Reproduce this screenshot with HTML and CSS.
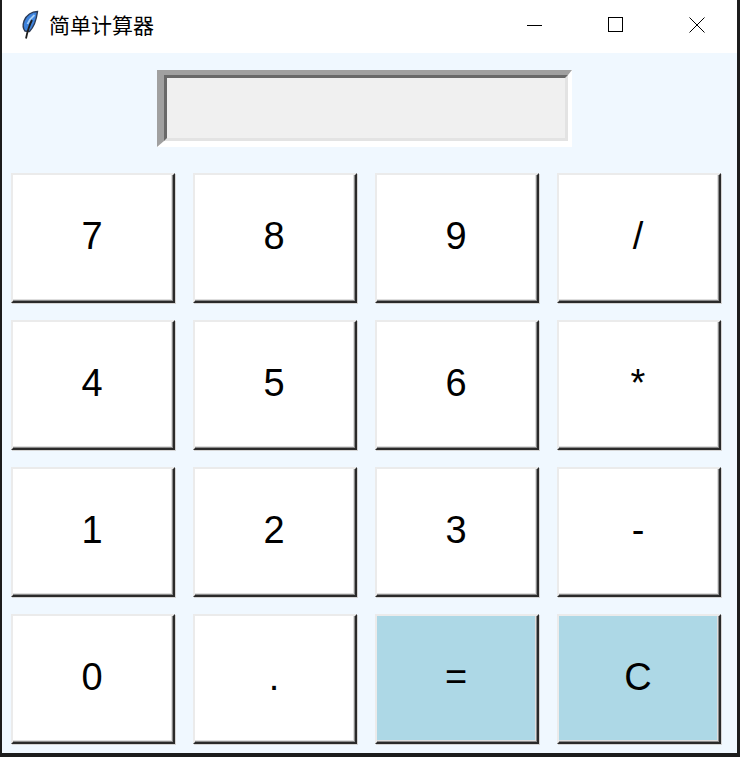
FILE: index.html
```html
<!DOCTYPE html>
<html>
	<head>
		<meta charset="utf-8">
		<title>简单计算器</title>
		<link rel="stylesheet" href="styles.css">
	</head>
	<body>
		<div class="window">
			<div class="titlebar">
				<svg class="feather" width="18" height="30" viewBox="0 0 18 30">
					<path d="M16.500 1.500C11 1.500 5 5 3 11C1.800 14.500 2 18.500 4 21L8.500 21.500C12.500 17.500 15.500 9 16.500 1.500Z" fill="#3d82dc" stroke="#2b3a55" stroke-width="1.400"/>
					<path d="M13.500 5C10.500 7.500 8 10.500 6.500 14" fill="none" stroke="#a8d0f7" stroke-width="1.800"/>
					<path d="M11 10C8.500 15 6.500 21 5 28.500" fill="none" stroke="#1d1d1d" stroke-width="1.800"/>
				</svg>
				<span class="title">简单计算器</span>
				<div class="controls">
					<svg class="ctrl" width="16" height="16" viewBox="0 0 16 16"><path d="M0 8.500H15" stroke="#000" fill="none"/></svg>
					<svg class="ctrl" width="16" height="16" viewBox="0 0 16 16"><rect x="0.500" y="0.500" width="14" height="14" stroke="#000" fill="none"/></svg>
					<svg class="ctrl" width="16" height="16" viewBox="0 0 16 16"><path d="M0.500 0.500L15.500 15.500M15.500 0.500L0.500 15.500" stroke="#000" fill="none"/></svg>
				</div>
			</div>
			<div class="client">
				<div class="entry"><div class="entry-inner"></div></div>
				<div class="keys">
					<button class="key">7</button>
					<button class="key">8</button>
					<button class="key">9</button>
					<button class="key">/</button>
					<button class="key">4</button>
					<button class="key">5</button>
					<button class="key">6</button>
					<button class="key">*</button>
					<button class="key">1</button>
					<button class="key">2</button>
					<button class="key">3</button>
					<button class="key">-</button>
					<button class="key">0</button>
					<button class="key">.</button>
					<button class="key blue">=</button>
					<button class="key blue">C</button>
				</div>
			</div>
		</div>
	</body>
</html>
```

FILE: styles.css
```css
*{
	margin: 0;
	padding: 0;
	box-sizing: border-box;
}
html,body{
	width: 740px;
	height: 757px;
	overflow: hidden;
}
.window{
	width: 740px;
	height: 757px;
	display: flex;
	flex-direction: column;
	border-left: 2px solid #1c1c1c;
	border-right: 3px solid #1c1c1c;
	border-bottom: 4px solid #1c1c1c;
	background: #fff;
}
.titlebar{
	height: 53px;
	display: flex;
	align-items: center;
	padding-left: 19px;
	background: #fff;
}
.feather{
	margin-bottom: 4px;
}
.title{
	margin-left: 10px;
	margin-bottom: 6px;
	font: 21px "Noto Sans CJK SC", "Liberation Sans", sans-serif;
	color: #000;
}
.controls{
	margin-left: auto;
	margin-right: 32px;
	margin-bottom: 4px;
	display: flex;
	gap: 65px;
}
.ctrl{
	display: block;
}
.client{
	flex: 1;
	background: #f0f8ff;
	padding: 17px 16px 0 9px;
}
.entry{
	width: 415px;
	height: 77px;
	margin-left: 146px;
	border-style: solid;
	border-width: 5px 4px 6px 7px;
	border-color: #a0a0a0 #fff #fff #a0a0a0;
}
.entry-inner{
	height: 100%;
	background: #f0f0f0;
	border-style: solid;
	border-width: 3px;
	border-color: #696969 #e3e3e3 #e3e3e3 #696969;
}
.keys{
	margin-top: 26px;
	display: grid;
	grid-template-columns: repeat(4, 164px);
	grid-auto-rows: 130px;
	column-gap: 18px;
	row-gap: 17px;
}
.key{
	background: #fff;
	padding: 0 2px 3px 0;
	border-style: solid;
	border-width: 2px;
	border-color: #ebebeb #2a2a2a #2a2a2a #ebebeb;
	box-shadow: inset -1px -1px 0 #8a8a8a, inset -2px -2px 0 #dedede, 1px 1px 0 #d4d4d4;
	font: 38px "Liberation Sans", Arial, sans-serif;
	color: #000;
}
.blue{
	background: #add8e6;
}
```
